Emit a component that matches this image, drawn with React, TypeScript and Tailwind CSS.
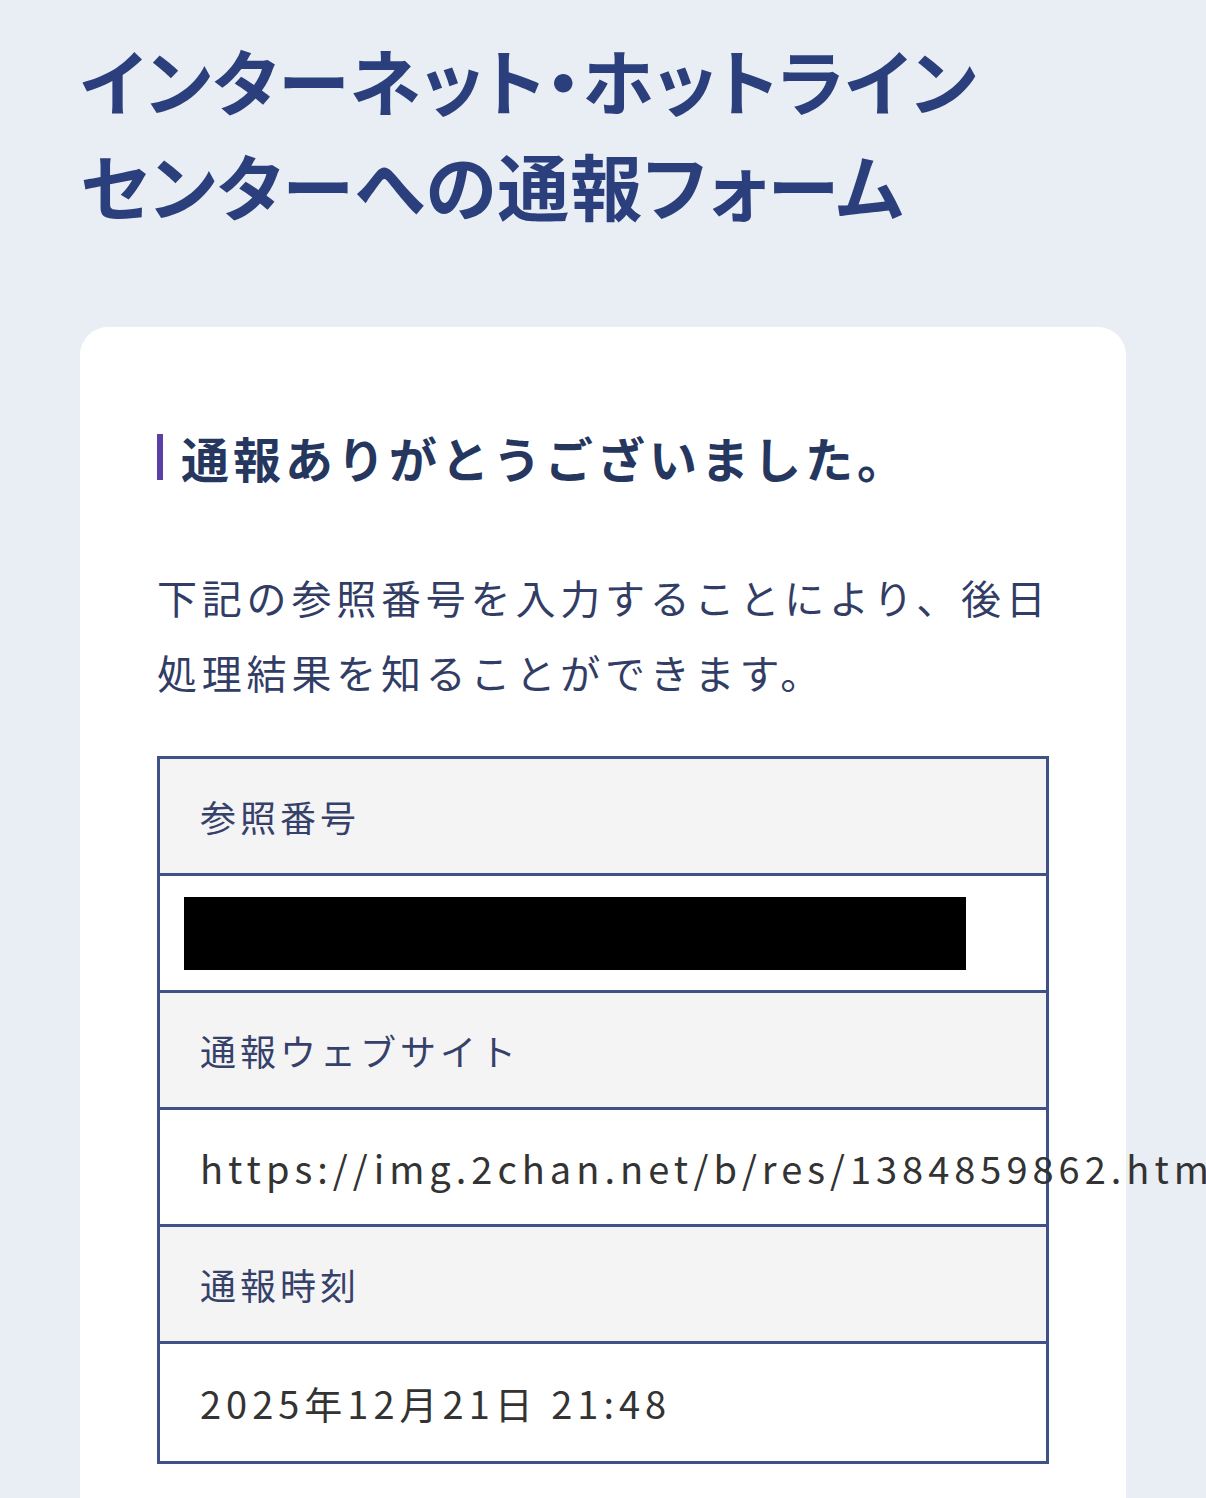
export default function App() {
  const rows = [
    { label: "参照番号", value: null },
    { label: "通報ウェブサイト", value: "https://img.2chan.net/b/res/1384859862.htm" },
    { label: "通報時刻", value: "2025年12月21日 21:48" },
  ];

  return (
    <main
      className="w-full min-h-[1498px] overflow-hidden bg-[#e9eef4]"
      style={{ fontFamily: '"Noto Sans CJK JP", "Noto Sans", sans-serif' }}
    >
      <div className="px-20 pt-[26px]">
        <h1 className="text-[72px] leading-[105px] font-bold tracking-[1px] text-[#2b3f7c] [font-feature-settings:'palt']">
          インターネット・ホットライン
          <br />
          センターへの通報フォーム
        </h1>

        <div className="mt-[91px] bg-white rounded-[28px] px-[77px] pt-[100px] pb-[60px] min-h-[1200px]">
          <div className="flex items-center gap-[18px]">
            <div className="w-[6px] h-[46px] bg-[#5b3fa6]" />
            <h2 className="text-[48px] leading-[60px] font-bold tracking-[4px] text-[#26375f]">
              通報ありがとうございました。
            </h2>
          </div>

          <p className="mt-[73px] text-[40px] leading-[75px] tracking-[4.8px] whitespace-nowrap text-[#323d66]">
            下記の参照番号を入力することにより、後日
            <br />
            処理結果を知ることができます。
          </p>

          <div className="mt-[46px] border-[3px] border-[#3f5187] flex flex-col">
            {rows.map((row, i) => (
              <div key={row.label} className="flex flex-col">
                <div className="h-[117px] flex items-center pl-[40px] bg-[#f4f4f5] border-b-[3px] border-[#3f5187] text-[36px] tracking-[4px] text-[#36416a]">
                  {row.label}
                </div>
                <div
                  className={`h-[117px] flex items-center bg-white whitespace-nowrap text-[38px] tracking-[5px] text-[#333333] ${
                    i < rows.length - 1 ? "border-b-[3px] border-[#3f5187]" : ""
                  } ${row.value ? "pl-[40px]" : "pl-[24px]"}`}
                >
                  {row.value ? row.value : <div className="w-[782px] h-[73px] bg-black" />}
                </div>
              </div>
            ))}
          </div>
        </div>
      </div>
    </main>
  );
}
